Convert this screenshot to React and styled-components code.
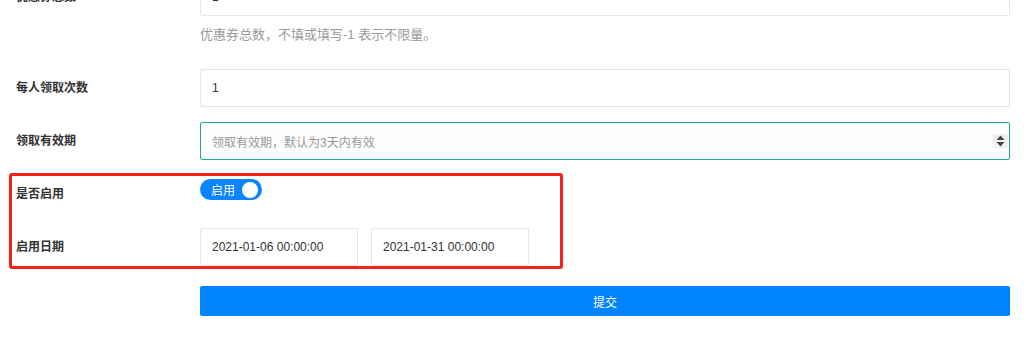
import React from "react"
import styled, { createGlobalStyle } from "styled-components"

const Global = createGlobalStyle`
  html, body {
    margin: 0;
    padding: 0;
    background: #ffffff;
    overflow: hidden;
  }
  body {
    font-family: "Liberation Sans", Arial, "Noto Sans CJK SC", sans-serif;
    color: #333333;
  }
`

const Form = styled.div`
  width: 1029px;
  height: 341px;
  overflow: hidden;
  padding-left: 16px;
  box-sizing: border-box;
`

const Row = styled.div`
  display: grid;
  grid-template-columns: 184px 810px;
  align-items: ${(p) => (p.$top ? "start" : "center")};
  margin-top: ${(p) => p.$mt || 15}px;
  min-height: ${(p) => p.$h || 38}px;
`

const Label = styled.div`
  font-size: 12px;
  font-weight: bold;
  color: #333333;
  line-height: 38px;
`

const Input = styled.div`
  height: 38px;
  box-sizing: border-box;
  border: 1px solid ${(p) => (p.$focus ? "#1ea59c" : "#e6e6e6")};
  border-radius: 2px;
  background: ${(p) => (p.$focus ? "#fdfdfd" : "#ffffff")};
  padding: 0 11px;
  display: flex;
  align-items: center;
  justify-content: space-between;
  font-size: 12px;
  color: ${(p) => (p.$placeholder ? "#999999" : "#333333")};
  width: ${(p) => (p.$w ? p.$w + "px" : "auto")};
`

const Help = styled.div`
  grid-column: 2;
  margin-top: 9px;
  font-size: 13px;
  line-height: 20px;
  color: #999999;
`

const Spinner = styled.span`
  width: 15px;
  height: 14px;
  margin-right: -10px;
  background: #f0f0f0;
  display: flex;
  align-items: center;
  justify-content: center;
`

const Switch = styled.div`
  margin-top: 4px;
  width: 62px;
  height: 21px;
  border-radius: 11px;
  background: #0a84ff;
  box-sizing: border-box;
  padding: 0 4px 0 11px;
  display: flex;
  align-items: center;
  justify-content: space-between;
  color: #ffffff;
  font-size: 12px;
`

const Knob = styled.span`
  width: 16px;
  height: 16px;
  border-radius: 50%;
  background: #ffffff;
`

const Group = styled.div`
  position: relative;
`

const Highlight = styled.div`
  position: absolute;
  left: -7px;
  top: -2px;
  width: 554px;
  height: 96px;
  box-sizing: border-box;
  border: 3px solid #f5201a;
  border-radius: 3px;
  pointer-events: none;
`

const Dates = styled.div`
  display: flex;
  gap: 13px;
`

const Submit = styled.button`
  grid-column: 2;
  height: 30px;
  border: none;
  border-radius: 2px;
  background: #0084ff;
  color: #ffffff;
  font-family: inherit;
  font-size: 12px;
  cursor: pointer;
`

const App = () => {
  return (
    <Form>
      <Global />
      <Row $top $mt={-22}>
        <Label>优惠券总数</Label>
        <Input>1</Input>
        <Help>优惠券总数，不填或填写-1 表示不限量。</Help>
      </Row>
      <Row $mt={24}>
        <Label>每人领取次数</Label>
        <Input>1</Input>
      </Row>
      <Row>
        <Label>领取有效期</Label>
        <Input $focus $placeholder>
          领取有效期，默认为3天内有效
          <Spinner>
            <svg width="9" height="12" viewBox="0 0 9 12">
              <path d="M4.5 0.5 L8.5 5 L0.5 5 Z" fill="#444" />
              <path d="M4.5 11.5 L8.5 7 L0.5 7 Z" fill="#444" />
            </svg>
          </Spinner>
        </Input>
      </Row>
      <Group>
        <Highlight />
        <Row $top>
          <Label>是否启用</Label>
          <Switch>
            启用
            <Knob />
          </Switch>
        </Row>
        <Row>
          <Label>启用日期</Label>
          <Dates>
            <Input $w={158}>2021-01-06 00:00:00</Input>
            <Input $w={158}>2021-01-31 00:00:00</Input>
          </Dates>
        </Row>
      </Group>
      <Row $mt={20} $h={30}>
        <span />
        <Submit>提交</Submit>
      </Row>
    </Form>
  )
}

export default App
